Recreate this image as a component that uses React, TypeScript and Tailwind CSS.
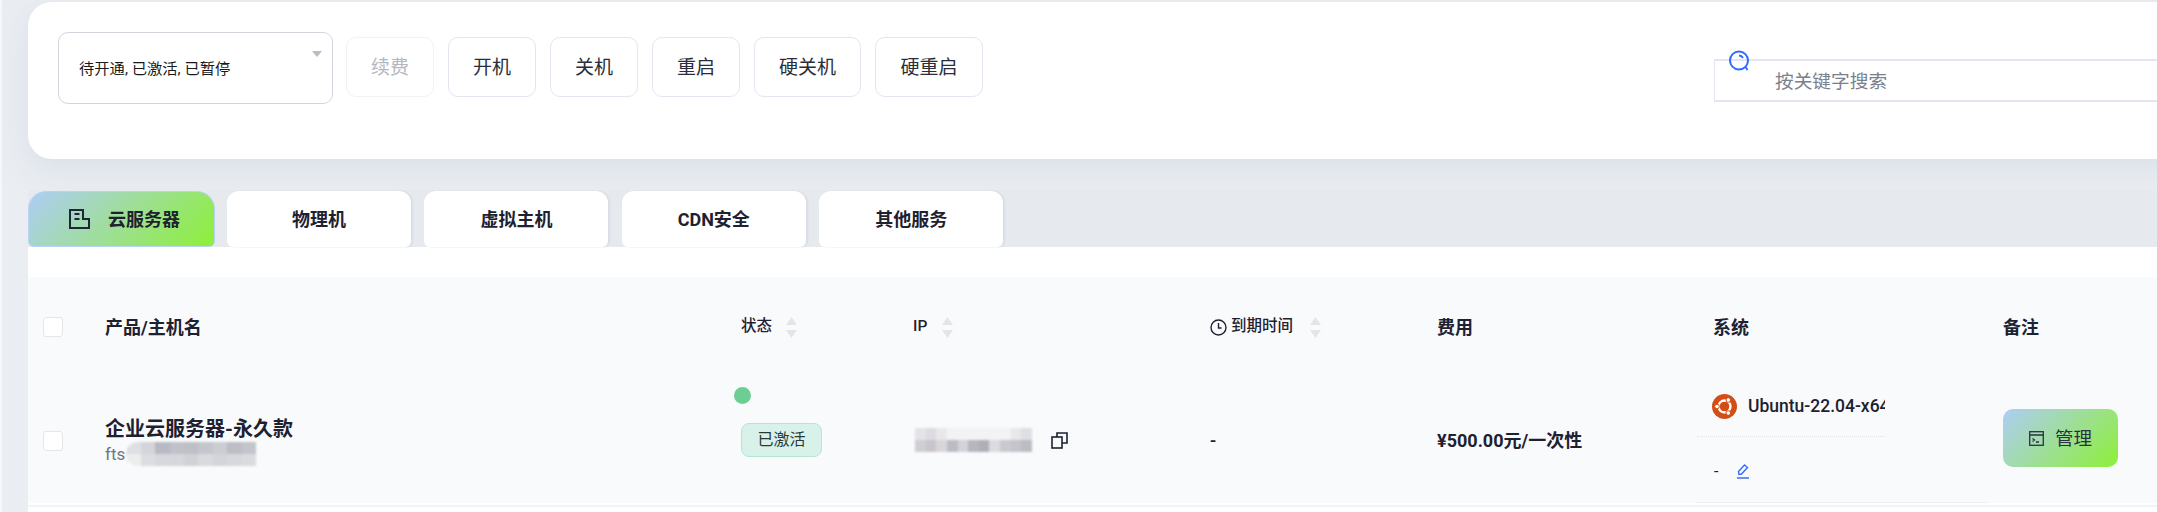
import React from 'react';

// power actions next to the status select
const ACTIONS = [
    { label: '续费', width: 'w-[88px]', disabled: true },
    { label: '开机', width: 'w-[88px]' },
    { label: '关机', width: 'w-[88px]' },
    { label: '重启', width: 'w-[88px]' },
    { label: '硬关机', width: 'w-[107px]' },
    { label: '硬重启', width: 'w-[108px]' },
];

const TABS = ['物理机', '虚拟主机', 'CDN安全', '其他服务'];

// mosaic squares used for the masked hostname / IP
const IP_MASK = [
    ['#e4e3e7', '#dddbe0', '#e8e7ea', '#f3f3f5', '#f3f3f5', '#f3f3f5', '#f3f3f5', '#f3f3f5', '#f3f3f5', '#e8e8eb', '#dfdfe3'],
    ['#cfced4', '#c8c6cc', '#d9d6da', '#bdbcc4', '#d4d3d8', '#b7b6bf', '#b0afb9', '#dcdbdf', '#c9c9cf', '#c4c4ca', '#bcbcc3'],
];
const HOST_MASK = [
    ['#dfe0e4', '#d4d5da', '#b8bac3', '#c0c2ca', '#bec0c8', '#c4c6cd', '#cbcdd3', '#bcbec6', '#c3c5cc'],
    ['#eceded', '#dcdde2', '#d7d8dd', '#d5d7dc', '#d0d2d8', '#d9dade', '#d3d5da', '#d6d8dd', '#d9dbdf'],
];

function Mask({ rows, className }: { rows: string[][]; className: string }) {
    return (
        <span className={`flex flex-col overflow-hidden ${className}`}>
            {rows.map((row, r) => (
                <span key={r} className="flex flex-1">
                    {row.map((c, i) => (
                        <span key={i} className="flex-1" style={{ backgroundColor: c }} />
                    ))}
                </span>
            ))}
        </span>
    );
}

function SortCaret() {
    return (
        <span className="flex flex-col gap-[5px]">
            <svg width="11" height="8" viewBox="0 0 11 8"><path d="M5.5 0 11 8H0z" fill="#e3e5e9" /></svg>
            <svg width="11" height="8" viewBox="0 0 11 8"><path d="M0 0h11L5.5 8z" fill="#e3e5e9" /></svg>
        </span>
    );
}

function Checkbox() {
    return <span className="block h-5 w-5 ml-[15px] rounded-[3px] border border-[#e4e6ec] bg-white" />;
}

export default function App() {
    return (
        <div className="w-[2157px] h-[512px] overflow-hidden bg-[#eaeef3] pt-[2px] pl-[26px] border-l-2 border-[#f6f7f9] text-[#1d2130] font-['Roboto','Noto_Sans_CJK_SC',sans-serif]">
            <div className="w-[2300px] h-[157px] rounded-l-[24px] bg-white pt-[30px] pl-[30px] flex items-start shadow-[0_10px_30px_rgba(190,196,208,0.35)]">
                <div className="relative flex h-[72px] w-[275px] shrink-0 items-center rounded-[10px] border border-[#d3d5dd] pl-[20px] pt-[2px] text-[15.3px] text-[#1a1a1a]">
                    待开通, 已激活, 已暂停
                    <svg className="absolute right-[10px] top-[18px]" width="10" height="6" viewBox="0 0 10 6"><path d="M0 0h10L5 6z" fill="#b9bcc4" /></svg>
                </div>
                <div className="ml-[13px] mt-[5px] flex shrink-0 gap-[14px]">
                    {ACTIONS.map(a => (
                        <div
                            key={a.label}
                            className={`flex h-[60px] items-center justify-center rounded-[10px] border pt-[3px] text-[19px] ${a.width} ${a.disabled ? 'border-[#f1f2f6] text-[#b5b7bf]' : 'border-[#e3e6ef] text-[#2a2e3a]'}`}
                        >
                            {a.label}
                        </div>
                    ))}
                </div>
                <div className="relative ml-[731px] mt-[27px] flex h-[43px] w-[500px] shrink-0 items-center border-2 border-l border-r-0 border-[#e3e6f0] pl-[60px] pt-[3px] text-[18.7px] text-[#7a808c]">
                    按关键字搜索
                    <svg className="absolute left-[13px] -top-[11px]" width="22" height="22" viewBox="0 0 22 22" fill="none" stroke="#2f6bff" strokeWidth="2">
                        <circle cx="11" cy="10.5" r="9" />
                        <path d="M11 5.5a5 5 0 0 1 4 2.5M17.5 17l2 3" />
                    </svg>
                </div>
            </div>

            <div className="mt-[31px] w-[2300px] flex h-[57px] bg-[#e6e9ee] pt-px">
                <div className="flex w-[187px] shrink-0 items-center gap-[18px] rounded-t-[18px] rounded-b-[6px] border border-[#b9d2f7] bg-[linear-gradient(135deg,#aecdf6,#8df037)] pl-[40px] text-[18px] font-bold">
                    <svg width="21" height="20" viewBox="0 0 21 20" fill="none" stroke="#1f2638" strokeWidth="2">
                        <path d="M1 1h13v9h6v9H1zM5.500 5h5M5.500 10h5" />
                    </svg>
                    云服务器
                </div>
                <div className="ml-[12px] flex gap-[13.4px]">
                    {TABS.map(t => (
                        <div key={t} className="flex w-[184px] shrink-0 items-center justify-center rounded-t-[12px] rounded-b-[6px] bg-white text-[18px] font-bold shadow-[2px_0_2px_#d9dde5]">
                            {t}
                        </div>
                    ))}
                </div>
            </div>

            <div className="w-[2300px] h-[265px] bg-white pt-[30px]">
                <div className="bg-[#f9fafc] grid grid-cols-[77px_636px_172px_297px_227px_276px_290px_1fr]">
                    <div className="flex h-[100px] items-center"><Checkbox /></div>
                    <div className="flex h-[100px] items-center text-[18px] font-bold">产品/主机名</div>
                    <div className="flex h-[100px] items-center gap-[14px] text-[15.5px] font-medium">状态 <SortCaret /></div>
                    <div className="flex h-[100px] items-center gap-[15px] text-[15.5px] font-medium">IP <SortCaret /></div>
                    <div className="flex h-[100px] items-center gap-[4px] text-[15.5px] font-medium">
                        <svg width="17" height="17" viewBox="0 0 17 17" fill="none" stroke="#1d2130" strokeWidth="1.400">
                            <circle cx="8.500" cy="8.500" r="7.500" />
                            <path d="M8.500 4v5h3" />
                        </svg>
                        到期时间
                        <span className="ml-[13px]"><SortCaret /></span>
                    </div>
                    <div className="flex h-[100px] items-center text-[18px] font-bold">费用</div>
                    <div className="flex h-[100px] items-center text-[18px] font-bold">系统</div>
                    <div className="flex h-[100px] items-center text-[18px] font-bold">备注</div>

                    <div className="flex h-[126px] items-center pt-[2px]"><Checkbox /></div>
                    <div className="flex h-[126px] flex-col justify-center pt-[2px]">
                        <div className="text-[20px] font-bold leading-[26px]">企业云服务器-永久款</div>
                        <div className="flex items-center text-[17px] leading-[24px] text-[#6f7580]">
                            fts
                            <Mask rows={HOST_MASK} className="ml-px h-[24px] w-[130px] rounded-l-full blur-[1px]" />
                        </div>
                    </div>
                    <div className="flex h-[126px] items-center">
                        <div className="relative flex h-[34px] w-[81px] items-center justify-center rounded-[8px] border border-[#b3e6d3] bg-[#d8f2e9] text-[16px] text-[#2a3a36]">
                            已激活
                            <span className="absolute -left-[8px] -top-[37px] h-[17px] w-[17px] rounded-full bg-[#6dce94]" />
                        </div>
                    </div>
                    <div className="flex h-[126px] items-center">
                        <Mask rows={IP_MASK} className="ml-[2px] h-[24px] w-[117px] blur-[1px]" />
                        <svg className="ml-[19px]" width="17" height="17" viewBox="0 0 17 17" fill="none" stroke="#1d2130" strokeWidth="1.600">
                            <rect x="1" y="5" width="10" height="11" />
                            <path d="M6 5V1h10v10h-5" />
                        </svg>
                    </div>
                    <div className="flex h-[126px] items-center text-[18px] font-medium">-</div>
                    <div className="flex h-[126px] items-center text-[18px] font-bold">¥500.00元/一次性</div>
                    <div className="-ml-[16px] flex h-[126px] flex-col">
                        <div className="flex h-[60px] w-[188px] items-center border-b border-dotted border-[#dfe2e8] pl-[15px] text-[17.5px] font-medium">
                            <svg className="mr-[11px] shrink-0" width="25" height="25" viewBox="0 0 25 25">
                                <circle cx="12.500" cy="12.500" r="12.500" fill="#d34d16" />
                                <circle cx="12.500" cy="12.500" r="6" fill="none" stroke="#fff" strokeWidth="2.400" />
                                <circle cx="5" cy="12.500" r="2.300" fill="#fff" stroke="#d34d16" />
                                <circle cx="16.300" cy="6" r="2.300" fill="#fff" stroke="#d34d16" />
                                <circle cx="16.300" cy="19" r="2.300" fill="#fff" stroke="#d34d16" />
                            </svg>
                            <span className="block w-[137px] shrink-0 overflow-hidden whitespace-nowrap">Ubuntu-22.04-x64</span>
                        </div>
                        <div className="flex h-[66px] w-[291px] items-center border-b border-dotted border-[#dfe2e8] pl-[17px] pt-[4px] text-[16px]">
                            -
                            <svg className="ml-[18px]" width="14" height="15" viewBox="0 0 14 15" fill="none" stroke="#3b6cf5" strokeWidth="1.400">
                                <path d="M3 10.500 2.500 7.500 8.500 1l3 2.500-6 6.500zM1 14h12" />
                            </svg>
                        </div>
                    </div>
                    <div className="flex h-[126px] items-center">
                        <div className="-mt-[4px] flex h-[58px] w-[115px] items-center justify-center gap-[11px] rounded-[10px] bg-[linear-gradient(135deg,#aecdf6,#8df037)] text-[18.500px] text-[#2a3140]">
                            <svg width="15" height="15" viewBox="0 0 15 15" fill="none" stroke="#2a3140" strokeWidth="1.300">
                                <rect x="0.700" y="0.700" width="13.600" height="13.600" />
                                <path d="M1 4h13M3.500 7.500l2 1.500-2 1.500M7 11h3" />
                            </svg>
                            <span className="pt-[3px]">管理</span>
                        </div>
                    </div>
                </div>
                <div className="mt-[2px] h-[2px] bg-[#f2f4f8]" />
            </div>
        </div>
    );
}
